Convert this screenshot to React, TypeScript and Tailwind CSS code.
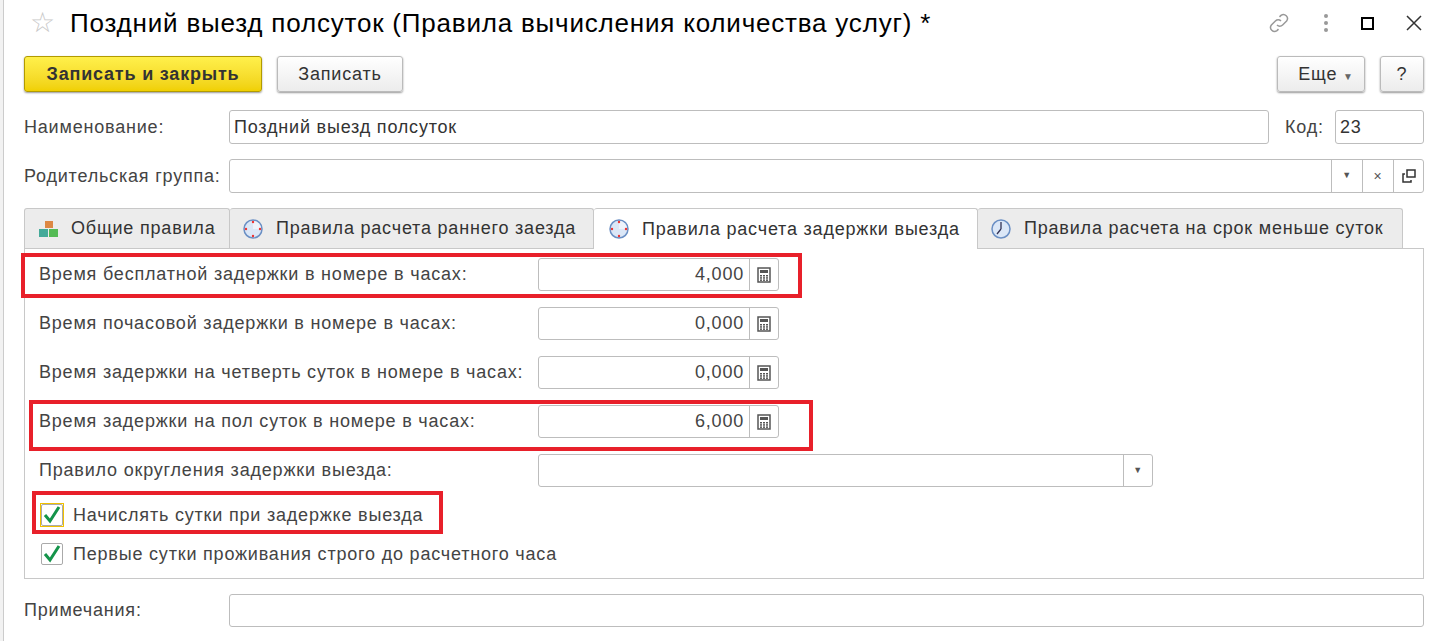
import React from "react";

const Calc = () => (
  <svg width="14" height="16" viewBox="0 0 14 16">
    <rect x="1" y="1" width="12" height="14" fill="none" stroke="#555" strokeWidth="1.5" />
    <rect x="3" y="3" width="8" height="3" fill="#555" />
    {[0, 1, 2].map((r) =>
      [0, 1, 2].map((c) => <rect key={r + "-" + c} x={3 + c * 3} y={8 + r * 2.2} width="2" height="1.5" fill="#555" />)
    )}
  </svg>
);

const Clock = ({ red }: { red?: boolean }) => (
  <svg width="22" height="22" viewBox="0 0 22 22">
    <circle cx="11" cy="11" r="9" fill="#dbe7f7" stroke="#6a8fc4" strokeWidth="1.5" />
    {red ? (
      <>
        <path d="M11 11 L11 3 A8 8 0 0 1 19 11 Z" fill="#eef3fb" />
        <circle cx="11" cy="4" r="1.2" fill="#e33" />
        <circle cx="18" cy="11" r="1.2" fill="#e33" />
        <circle cx="11" cy="18" r="1.2" fill="#e33" />
        <circle cx="4" cy="11" r="1.2" fill="#e33" />
      </>
    ) : (
      <path d="M11 11 L11 4 M11 11 L7 16" stroke="#335" strokeWidth="1.3" />
    )}
  </svg>
);

const Check = () => (
  <div className="w-[22px] h-[22px] border border-[#aaa] rounded-[2px] bg-white flex items-center justify-center">
    <svg width="20" height="20" viewBox="0 0 20 20">
      <path d="M3 10 L8 16 L17 2" fill="none" stroke="#14944a" strokeWidth="3" />
    </svg>
  </div>
);

const NumField = ({ v }: { v: string }) => (
  <div className="w-[241px] h-[33px] border border-[#bdbdbd] rounded-[3px] bg-white flex">
    <div className="flex-1 text-right pr-[5px] leading-[31px]">{v}</div>
    <div className="w-[29px] border-l border-[#bdbdbd] flex items-center justify-center"><Calc /></div>
  </div>
);

export default function App() {
  const rows = [
    ["Время бесплатной задержки в номере в часах:", "4,000"],
    ["Время почасовой задержки в номере в часах:", "0,000"],
    ["Время задержки на четверть суток в номере в часах:", "0,000"],
    ["Время задержки на пол суток в номере в часах:", "6,000"],
  ];
  return (
    <div className="relative w-[1445px] h-[641px] bg-white flex text-[18px] tracking-[0.8px] text-[#444] overflow-hidden" style={{ fontFamily: "Arial, 'Liberation Sans', sans-serif" }}>
      <div className="w-[4px] bg-[#f2f2f2] border-r border-[#ccc]" />
      <div className="flex-1 flex flex-col pl-[20px] pr-[21px]">
        <div className="h-[46px] flex items-center">
          <span className="text-[28px] text-[#c8c8c8] ml-[6px] w-[40px]">☆</span>
          <span className="text-[26px] tracking-[0.8px] text-black flex-1 whitespace-nowrap">Поздний выезд полсуток (Правила вычисления количества услуг) *</span>
          <div className="flex items-center gap-[32px] mr-[2px]">
            <svg width="24" height="24" viewBox="0 0 24 24" fill="none" stroke="#999" strokeWidth="1.5"><path d="M10 14a4 4 0 0 0 5.6 0l4-4a4 4 0 0 0-5.6-5.6l-1.5 1.5" /><path d="M14 10a4 4 0 0 0-5.6 0l-4 4a4 4 0 0 0 5.6 5.6l1.5-1.5" /></svg>
            <svg width="6" height="20" viewBox="0 0 6 20"><circle cx="3" cy="3" r="2" fill="#999" /><circle cx="3" cy="10" r="2" fill="#999" /><circle cx="3" cy="17" r="2" fill="#999" /></svg>
            <div className="w-[13px] h-[13px] border-2 border-black" />
            <svg width="16" height="16" viewBox="0 0 16 16" stroke="#333" strokeWidth="1.5"><path d="M1 1L15 15M15 1L1 15" /></svg>
          </div>
        </div>
        <div className="h-[36px] mt-[10px] flex items-center">
          <button className="h-[36px] w-[238px] rounded-[3px] border border-[#b29b00] bg-gradient-to-b from-[#fff04a] to-[#f0d000] font-bold text-[#333] shadow-[0_1px_2px_#999]">Записать и закрыть</button>
          <button className="h-[36px] w-[126px] ml-[15px] rounded-[3px] border border-[#bbb] bg-gradient-to-b from-white to-[#ececec] text-[#333] shadow-[0_1px_2px_#999]">Записать</button>
          <div className="flex-1" />
          <button className="h-[36px] w-[88px] rounded-[3px] border border-[#bbb] bg-gradient-to-b from-white to-[#ececec] text-[#333] shadow-[0_1px_2px_#999] pl-[10px]">Еще <span className="text-[10px] text-[#666]">▼</span></button>
          <button className="h-[36px] w-[44px] ml-[15px] rounded-[3px] border border-[#bbb] bg-gradient-to-b from-white to-[#ececec] text-[#333] shadow-[0_1px_2px_#999]">?</button>
        </div>
        <div className="h-[34px] mt-[18px] flex items-center">
          <span className="w-[205px]">Наименование:</span>
          <div className="flex-1 h-[34px] border border-[#bdbdbd] rounded-[3px] px-[4px] leading-[32px] text-[#333]">Поздний выезд полсуток</div>
          <span className="ml-[16px] w-[50px]">Код:</span>
          <div className="w-[89px] h-[34px] border border-[#bdbdbd] rounded-[3px] px-[4px] leading-[32px] text-[#333]">23</div>
        </div>
        <div className="h-[34px] mt-[15px] flex items-center">
          <span className="w-[205px] whitespace-nowrap">Родительская группа:</span>
          <div className="flex-1 h-[34px] border border-[#bdbdbd] rounded-[3px] flex">
            <div className="flex-1" />
            <div className="w-[31px] border-l border-[#bdbdbd] flex items-center justify-center text-[9px] text-[#555]">▼</div>
            <div className="w-[31px] border-l border-[#bdbdbd] flex items-center justify-center text-[14px] text-[#555]">×</div>
            <div className="w-[30px] border-l border-[#bdbdbd] flex items-center justify-center">
              <svg width="14" height="14" viewBox="0 0 14 14" fill="none" stroke="#333" strokeWidth="1.5"><rect x="5" y="1" width="8" height="7" /><path d="M3 5H1v8h8v-2" /></svg>
            </div>
          </div>
        </div>
        <div className="h-[40px] mt-[15px] flex">
          <div className="w-[206px] border border-[#c8c8c8] border-b-0 bg-[#ececec] flex items-center gap-[10px] pl-[12px] rounded-t-[3px] whitespace-nowrap">
            <svg width="24" height="20" viewBox="0 0 24 20"><rect x="8" y="2" width="8" height="7" fill="#d84" /><rect x="2" y="10" width="9" height="8" fill="#4a9" /><rect x="12" y="10" width="9" height="8" fill="#5b5" /></svg>
            <span className="text-[#333]">Общие правила</span>
          </div>
          <div className="w-[364px] border border-[#c8c8c8] border-b-0 border-l-0 bg-[#ececec] flex items-center gap-[12px] pl-[12px] rounded-t-[3px] whitespace-nowrap"><Clock red /><span className="text-[#333]">Правила расчета раннего заезда</span></div>
          <div className="w-[384px] border border-[#c8c8c8] border-b-0 border-l-0 bg-white flex items-center gap-[12px] pl-[14px] rounded-t-[3px] relative z-10 h-[41px] whitespace-nowrap"><Clock red /><span className="text-[#333]">Правила расчета задержки выезда</span></div>
          <div className="w-[425px] border border-[#c8c8c8] border-b-0 border-l-0 bg-[#ececec] flex items-center gap-[12px] pl-[12px] rounded-t-[3px] whitespace-nowrap"><Clock /><span className="text-[#333]">Правила расчета на срок меньше суток</span></div>
        </div>
        <div className="h-[331px] border border-[#c8c8c8] flex flex-col pl-[14px] pt-[9px]">
          {rows.map(([l, v]) => (
            <div key={l} className="h-[33px] mb-[16px] flex items-center">
              <span className="w-[499px] whitespace-nowrap">{l}</span>
              <NumField v={v} />
            </div>
          ))}
          <div className="h-[33px] flex items-center">
            <span className="w-[499px]">Правило округления задержки выезда:</span>
            <div className="w-[615px] h-[33px] border border-[#bdbdbd] rounded-[3px] flex">
              <div className="flex-1" />
              <div className="w-[29px] border-l border-[#bdbdbd] flex items-center justify-center text-[9px] text-[#555]">▼</div>
            </div>
          </div>
          <div className="h-[22px] mt-[17px] flex items-center gap-[10px] ml-[2px]">
            <div className="outline outline-1 outline-[#f0c000]"><Check /></div>
            <span>Начислять сутки при задержке выезда</span>
          </div>
          <div className="h-[22px] mt-[17px] flex items-center gap-[10px] ml-[2px]">
            <Check /><span>Первые сутки проживания строго до расчетного часа</span>
          </div>
        </div>
        <div className="h-[33px] mt-[15px] flex items-center">
          <span className="w-[205px]">Примечания:</span>
          <div className="flex-1 h-[33px] border border-[#bdbdbd] rounded-[3px]" />
        </div>
      </div>
      <div className="absolute left-[21px] top-[253px] w-[781px] h-[45px] border-4 border-[#e8202a]" />
      <div className="absolute left-[29px] top-[400px] w-[784px] h-[51px] border-4 border-[#e8202a]" />
      <div className="absolute left-[32px] top-[491px] w-[411px] h-[43px] border-4 border-[#e8202a]" />
    </div>
  );
}
